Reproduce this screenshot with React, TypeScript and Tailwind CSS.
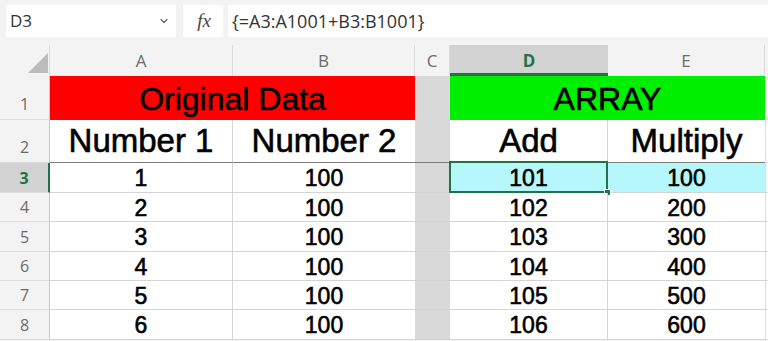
import { ChevronDown } from 'lucide-react';

const ui = "font-['Open_Sans','Noto_Sans',sans-serif]";
const cell = "font-['Liberation_Sans',Arial,sans-serif] text-black [-webkit-text-stroke:0.6px_#000]";

const dataRows = [
  { n: 3, a: '1', b: '100', d: '101', e: '100', h: 'h-[30px]' },
  { n: 4, a: '2', b: '100', d: '102', e: '200', h: 'h-[29px]' },
  { n: 5, a: '3', b: '100', d: '103', e: '300', h: 'h-[30px]' },
  { n: 6, a: '4', b: '100', d: '104', e: '400', h: 'h-[29px]' },
  { n: 7, a: '5', b: '100', d: '105', e: '500', h: 'h-[29px]' },
  { n: 8, a: '6', b: '100', d: '106', e: '600', h: 'h-[30px]' },
];

function RowHead({ n, active, tall }: { n: number; active?: boolean; tall?: boolean }) {
  return (
    <div
      className={`flex w-[50px] shrink-0 justify-center border-b border-[#dcdcdc] text-[16px] ${ui} ${
        tall ? 'items-end pb-[3px]' : 'items-center'
      } ${
        active
          ? 'border-r-2 border-r-[#217346] bg-[#d2d2d2] font-bold text-[#217346]'
          : 'border-r border-r-[#c8c8c8] bg-[#f3f3f3] text-[#6b6b6b]'
      }`}
    >
      {n}
    </div>
  );
}

export default function App() {
  return (
    <div className="h-[341px] w-[768px] overflow-hidden bg-[#f3f3f3]">
      {/* formula bar */}
      <div className={`flex h-[45px] items-start pt-[5px] ${ui}`}>
        <div className="ml-[6px] flex h-[32px] w-[170px] items-center justify-between bg-white pl-[4px] pr-[6px] text-[17px] text-[#333]">
          <span>D3</span>
          <ChevronDown className="h-3 w-3 text-[#666]" strokeWidth={2.5} />
        </div>
        <div className="ml-[7px] flex h-[32px] w-[40px] items-center justify-center bg-white pl-[2px] font-['Liberation_Serif',serif] text-[19px] italic text-[#444]">
          fx
        </div>
        <div className="ml-[5px] flex h-[32px] flex-1 items-center bg-white pl-[4px] text-[18px] text-[#333]">
          {'{=A3:A1001+B3:B1001}'}
        </div>
      </div>

      {/* column headers */}
      <div className={`flex h-[31px] text-[17px] text-[#6b6b6b] ${ui}`}>
        <div className="relative w-[50px] shrink-0 border-r border-[#dcdcdc]">
          <svg className="absolute left-[28px] top-[8px]" width="20" height="20" viewBox="0 0 20 20">
            <polygon points="20,0 20,20 0,20" fill="#bcbcbc" />
          </svg>
        </div>
        <div className="flex w-[183px] shrink-0 items-center justify-center border-r border-[#dcdcdc]">A</div>
        <div className="flex w-[182px] shrink-0 items-center justify-center border-r border-[#dcdcdc]">B</div>
        <div className="flex w-[35px] shrink-0 items-center justify-center border-r border-[#dcdcdc]">C</div>
        <div className="flex w-[158px] shrink-0 items-center justify-center border-b-[3px] border-[#217346] bg-[#d2d2d2] pt-[3px] font-bold text-[#217346]">
          D
        </div>
        <div className="flex w-[157px] shrink-0 items-center justify-center border-r border-[#dcdcdc]">E</div>
        <div className="flex-1" />
      </div>

      {/* row 1 */}
      <div className="flex h-[44px] bg-white">
        <RowHead n={1} tall />
        <div className={`flex w-[365px] shrink-0 items-end justify-center bg-[#ff0000] pb-[5px] text-[32px] leading-none ${cell}`}>
          Original Data
        </div>
        <div className="w-[35px] shrink-0 bg-[#d9d9d9]" />
        <div className={`flex w-[315px] shrink-0 items-end justify-center bg-[#00ee00] pb-[5px] text-[32px] leading-none ${cell}`}>
          ARRAY
        </div>
        <div className="flex-1 border-b border-l border-[#dcdcdc]" />
      </div>

      {/* row 2 */}
      <div className="flex h-[43px] bg-white">
        <RowHead n={2} tall />
        <div className={`flex w-[183px] shrink-0 items-end justify-center border-b border-r border-b-[#7d7d7d] border-r-[#d4d4d4] pb-[5px] text-[33px] leading-none ${cell}`}>
          Number 1
        </div>
        <div className={`flex w-[182px] shrink-0 items-end justify-center border-b border-b-[#7d7d7d] pb-[5px] text-[33px] leading-none ${cell}`}>
          Number 2
        </div>
        <div className="w-[35px] shrink-0 border-b border-[#7d7d7d] bg-[#d9d9d9]" />
        <div className={`flex w-[158px] shrink-0 items-end justify-center border-b border-r border-b-[#7d7d7d] border-r-[#d4d4d4] pb-[5px] text-[33px] leading-none ${cell}`}>
          Add
        </div>
        <div className={`flex w-[157px] shrink-0 items-end justify-center border-b border-b-[#7d7d7d] pb-[5px] text-[33px] leading-none ${cell}`}>
          Multiply
        </div>
        <div className="flex-1 border-b border-l border-[#dcdcdc]" />
      </div>

      {/* data rows */}
      {dataRows.map((r) => {
        const first = r.n === 3;
        const fill = first ? 'bg-[#b5f7fa]' : 'bg-white';
        return (
          <div key={r.n} className={`flex ${r.h}`}>
            <RowHead n={r.n} active={first} />
            <div className={`flex w-[183px] shrink-0 items-center justify-center border-b border-r border-[#d4d4d4] bg-white pt-[2px] text-[23px] leading-none ${cell}`}>
              {r.a}
            </div>
            <div className={`flex w-[182px] shrink-0 items-center justify-center border-b border-[#d4d4d4] bg-white pt-[2px] text-[23px] leading-none ${cell}`}>
              {r.b}
            </div>
            <div className="w-[35px] shrink-0 border-b border-[#d4d4d4] bg-[#d9d9d9]" />
            <div className={`relative flex w-[158px] shrink-0 items-center justify-center border-b border-r border-[#d4d4d4] pt-[2px] text-[23px] leading-none ${fill} ${cell}`}>
              {r.d}
              {first && (
                <>
                  <div className="absolute -left-px -top-[2px] bottom-[-1px] right-[-1px] border-2 border-[#217346]" />
                  <div className="absolute bottom-[-4px] right-[-4px] h-[7px] w-[7px] border border-white bg-[#217346]" />
                </>
              )}
            </div>
            <div className={`flex w-[157px] shrink-0 items-center justify-center border-b border-[#d4d4d4] pt-[2px] text-[23px] leading-none ${fill} ${cell}`}>
              {r.e}
            </div>
            <div className="flex-1 border-b border-l border-[#dcdcdc] bg-white" />
          </div>
        );
      })}
    </div>
  );
}
